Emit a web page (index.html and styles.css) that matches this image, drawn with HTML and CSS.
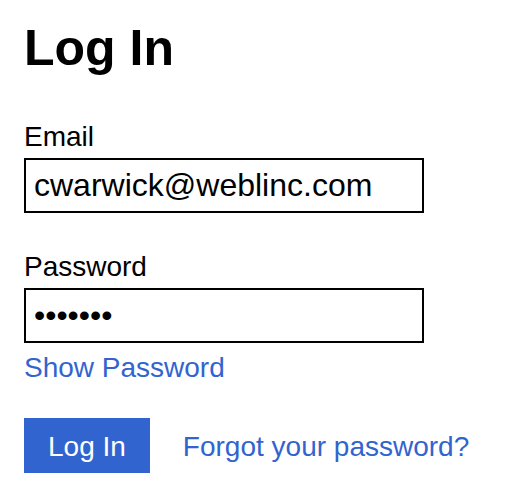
FILE: index.html
```html
<!DOCTYPE html>
<html lang="en">
<head>
<meta charset="utf-8">
<title>Log In</title>
<link rel="stylesheet" href="styles.css">
</head>
<body>
<main class="page">
  <h1 class="title">Log In</h1>
  <form class="form">
    <div class="field field-email">
      <label class="label" for="email">Email</label>
      <input class="input" id="email" type="text" value="cwarwick@weblinc.com">
    </div>
    <div class="field field-password">
      <label class="label" for="password">Password</label>
      <input class="input" id="password" type="password" value="1234567">
      <a class="link show-link" href="#">Show Password</a>
    </div>
    <div class="actions">
      <button class="button" type="button">Log In</button>
      <a class="link" href="#">Forgot your password?</a>
    </div>
  </form>
</main>
</body>
</html>
```
FILE: styles.css
```css
html, body {
  margin: 0;
  padding: 0;
  background: #ffffff;
}
body {
  font-family: "Liberation Sans", Arial, sans-serif;
  color: #000000;
}
.page {
  padding: 20px 24px 0 24px;
}
.title {
  margin: 0;
  font-size: 50px;
  line-height: 56px;
  font-weight: bold;
}
.form {
  display: flex;
  flex-direction: column;
  margin-top: 45px;
}
.field {
  display: flex;
  flex-direction: column;
  align-items: flex-start;
}
.field-password {
  margin-top: 38px;
}
.label {
  font-size: 28px;
  line-height: 32px;
  margin-bottom: 5px;
}
.input {
  box-sizing: border-box;
  width: 400px;
  height: 55px;
  margin: 0;
  border: 2px solid #000000;
  border-radius: 0;
  padding: 0 8px;
  font-family: "Liberation Sans", Arial, sans-serif;
  font-size: 32px;
  color: #000000;
  background: #ffffff;
  outline: none;
}
.link {
  font-size: 28px;
  line-height: 32px;
  color: #3264d0;
  text-decoration: none;
}
.show-link {
  margin-top: 9px;
}
.actions {
  display: flex;
  align-items: baseline;
  gap: 33px;
  margin-top: 34px;
}
.button {
  box-sizing: border-box;
  height: 55px;
  margin: 0;
  padding: 3px 24px 0 24px;
  border: none;
  border-radius: 0;
  background: #3264d0;
  color: #ffffff;
  font-family: "Liberation Sans", Arial, sans-serif;
  font-size: 28px;
  line-height: 32px;
  cursor: pointer;
}
```
